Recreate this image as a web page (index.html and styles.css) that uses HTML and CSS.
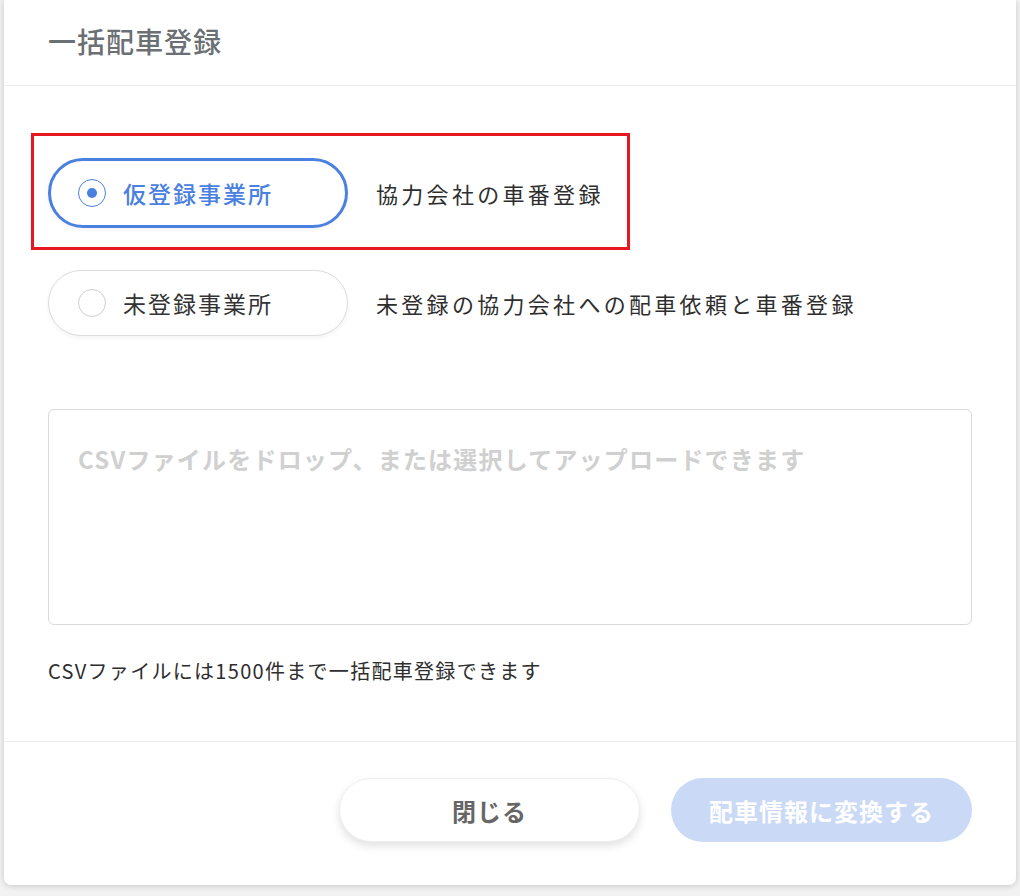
FILE: index.html
```html
<!DOCTYPE html>
<html lang="ja">
<head>
<meta charset="utf-8">
<title>一括配車登録</title>
<link rel="stylesheet" href="styles.css">
</head>
<body>
<div class="dialog">
  <div class="dialog-header">
    <h1 class="dialog-title">一括配車登録</h1>
  </div>
  <div class="dialog-body">
    <div class="annotation"></div>
    <div class="options">
      <div class="option-row">
        <label class="option selected">
          <span class="radio"><span class="radio-dot"></span></span>
          <span class="option-label">仮登録事業所</span>
        </label>
        <span class="option-desc">協力会社の車番登録</span>
      </div>
      <div class="option-row">
        <label class="option">
          <span class="radio"></span>
          <span class="option-label">未登録事業所</span>
        </label>
        <span class="option-desc">未登録の協力会社への配車依頼と車番登録</span>
      </div>
    </div>
    <div class="dropzone">
      <p class="dropzone-placeholder">CSVファイルをドロップ、または選択してアップロードできます</p>
    </div>
    <p class="helper">CSVファイルには1500件まで一括配車登録できます</p>
  </div>
  <div class="dialog-footer">
    <button class="btn btn-close">閉じる</button>
    <button class="btn btn-primary" disabled>配車情報に変換する</button>
  </div>
</div>
</body>
</html>
```

FILE: styles.css
```css
* { box-sizing: border-box; }

html, body {
  margin: 0;
  padding: 0;
  background: #f2f2f2;
  font-family: "Noto Sans CJK JP", "Noto Sans", sans-serif;
  color: #333;
}

body {
  height: 896px;
  overflow: hidden;
}

.dialog {
  margin-left: 4px;
  width: 1012px;
  background: #fff;
  border-radius: 0 0 7px 7px;
  box-shadow: 0 1px 6px rgba(0, 0, 0, 0.18);
}

.dialog-header {
  height: 86px;
  padding: 21px 44px 0;
  border-bottom: 1px solid #ececec;
}

.dialog-title {
  margin: 0;
  font-size: 28px;
  line-height: 40px;
  font-weight: 500;
  letter-spacing: 1px;
  color: #6b7074;
}

.dialog-body {
  position: relative;
  padding: 72px 44px 56px;
}

.annotation {
  position: absolute;
  left: 27px;
  top: 47px;
  width: 599px;
  height: 117px;
  border: 3px solid #e8161f;
  pointer-events: none;
}

.options {
  display: flex;
  flex-direction: column;
  gap: 42px;
}

.option-row {
  display: flex;
  align-items: center;
  gap: 28px;
}

.option {
  display: flex;
  align-items: center;
  gap: 17px;
  width: 300px;
  height: 66px;
  padding-left: 29px;
  border: 1px solid #dcdcdc;
  border-radius: 40px;
  background: #fff;
  box-shadow: 0 2px 4px rgba(0, 0, 0, 0.05);
}

.option.selected {
  height: 70px;
  padding-left: 27px;
  border: 3px solid #4a80e0;
}

.radio {
  flex: none;
  display: flex;
  align-items: center;
  justify-content: center;
  width: 28px;
  height: 28px;
  border: 1px solid #cfcfcf;
  border-radius: 50%;
}

.option.selected .radio {
  border-color: #4a80e0;
}

.radio-dot {
  width: 10px;
  height: 10px;
  border-radius: 50%;
  background: #4a80e0;
}

.option-label {
  font-size: 23px;
  letter-spacing: 2px;
  line-height: 1;
  color: #333;
}

.option.selected .option-label {
  color: #4a80e0;
  font-weight: 500;
}

.option-desc {
  font-size: 22px;
  letter-spacing: 3.3px;
  color: #2e2e2e;
}

.dropzone {
  margin-top: 73px;
  height: 216px;
  padding: 30px 29px;
  border: 1px solid #dadada;
  border-radius: 6px;
}

.dropzone-placeholder {
  margin: 0;
  font-size: 24px;
  line-height: 38px;
  letter-spacing: 1.2px;
  font-weight: 700;
  color: #d0d0d0;
}

.helper {
  margin: 32px 0 0;
  font-size: 20px;
  line-height: 28px;
  letter-spacing: 1.3px;
  color: #2e2e2e;
}

.dialog-footer {
  display: flex;
  justify-content: flex-end;
  gap: 31px;
  padding: 36px 44px 43px;
  border-top: 1px solid #ececec;
}

.btn {
  width: 301px;
  height: 64px;
  border-radius: 32px;
  font-family: inherit;
  font-size: 24px;
  font-weight: 700;
  letter-spacing: 1px;
  cursor: pointer;
}

.btn-close {
  background: #fff;
  color: #666;
  border: 1px solid #efefef;
  box-shadow: 0 4px 8px rgba(0, 0, 0, 0.12);
}

.btn-primary {
  background: #c9d9f6;
  color: #fff;
  border: none;
}
```
